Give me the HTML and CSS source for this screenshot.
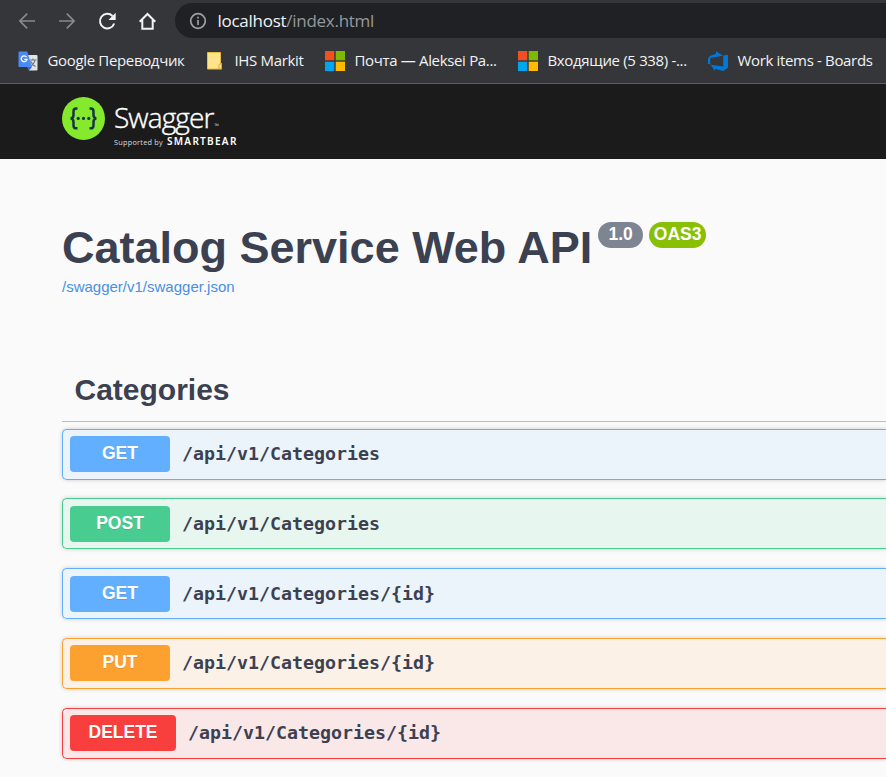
FILE: index.html
```html
<!DOCTYPE html>
<html lang="en">
<head>
<meta charset="utf-8">
<title>Swagger UI</title>
<link rel="stylesheet" href="styles.css">
</head>
<body>
<header class="browser">
  <div class="toolbar">
    <svg class="nav dim" viewBox="0 0 20 20"><path d="M18 10H3M10.200 2.700 2.900 10l7.300 7.300"/></svg>
    <svg class="nav dim" viewBox="0 0 20 20"><path d="M2 10h15M9.800 2.700 17.100 10l-7.300 7.300"/></svg>
    <svg class="nav" viewBox="0 0 20 20"><path d="M15.500 5A7.300 7.300 0 1 0 17.200 12.500"/><path class="solid" d="M18.700 1.800v7.300h-7.300z"/></svg>
    <svg class="nav" viewBox="0 0 20 20"><path d="M2.700 10.700 10.500 3l7.800 7.700M5.300 9v8.700h10.400V9"/></svg>
    <div class="address">
      <svg class="info" viewBox="0 0 18 18"><circle cx="9" cy="9" r="7.300"/><path d="M9 8v5M9 4.700v1.900"/></svg>
      <span class="url">localhost<span class="url-path">/index.html</span></span>
    </div>
  </div>
  <nav class="bookmarks">
    <a class="bookmark translate"><svg class="fav" viewBox="0 0 20 20"><path fill="#e1e3e6" d="M8 4h10.500q1 0 1 1v13.500q0 1-1 1H11z"/><path fill="none" stroke="#6c7a83" stroke-width="1.200" d="M11.500 9h7M15 7.500V9m2 0c-.5 3-2.500 5-5 6.500M12.500 10c1 2.500 3 4.500 5 5.500"/><path fill="#3367d6" d="M9 16h5l-3 3.500z"/><path fill="#4b8bf5" d="M1.500.5h7.700L14 16H1.500q-1 0-1-1V1.500q0-1 1-1z"/><path fill="none" stroke="#fff" stroke-width="1.300" d="M8.500 6A2.900 2.900 0 1 0 9 8.400H6.300"/></svg><span class="label">Google Переводчик</span></a>
    <a class="bookmark ihs"><svg class="fav" viewBox="0 0 20 20"><path fill="#ffe48c" stroke="#e9bd45" d="M2.500 1.500h13v11h1v5.500h-14z"/><path fill="#ffe48c" stroke="#dda928" d="M14 17.500v-4l2.500-1v5.500z"/></svg><span class="label">IHS Markit</span></a>
    <a class="bookmark mail"><svg class="fav" viewBox="0 0 20 20"><path fill="#f25022" d="M0 0h9.300v9.300H0z"/><path fill="#7fba00" d="M10.700 0H20v9.300h-9.300z"/><path fill="#00a4ef" d="M0 10.700h9.300V20H0z"/><path fill="#ffb900" d="M10.700 10.700H20V20h-9.300z"/></svg><span class="label">Почта — Aleksei Pa...</span></a>
    <a class="bookmark inbox"><svg class="fav" viewBox="0 0 20 20"><path fill="#f25022" d="M0 0h9.300v9.300H0z"/><path fill="#7fba00" d="M10.700 0H20v9.300h-9.300z"/><path fill="#00a4ef" d="M0 10.700h9.300V20H0z"/><path fill="#ffb900" d="M10.700 10.700H20V20h-9.300z"/></svg><span class="label">Входящие (5 338) -...</span></a>
    <a class="bookmark boards"><svg class="fav" viewBox="0 0 20 20"><path fill="#0078d7" d="M0 7.300 2 5 8 2.800V.2L15 4.700 2.300 7v6.500L0 13zM20 3.700v13L15.200 20 7 17.800V20l-4.400-6.300 12.600 1.700V4.600z"/></svg><span class="label">Work items - Boards</span></a>
  </nav>
</header>
<div class="topbar">
  <svg class="mark" viewBox="0 0 43 43"><circle cx="21.500" cy="21.500" r="21.500" fill="#85ea2d"/><g fill="none" stroke="#173647" stroke-width="2.500"><path d="M15.500 11.600h-1.300q-2.700 0-2.700 2.900v3.500q0 3.400-3 3.400 3 0 3 3.500v3.500q0 2.900 2.700 2.900h1.300M27.500 11.600h1.300q2.700 0 2.700 2.900v3.500q0 3.400 3 3.400-3 0-3 3.500v3.500q0 2.900-2.700 2.900h-1.300"/></g><g fill="#173647"><circle cx="16.200" cy="21.400" r="1.600"/><circle cx="21.500" cy="21.400" r="1.600"/><circle cx="26.800" cy="21.400" r="1.600"/></g></svg>
  <div class="wordmark">
    <div class="brand">Swagger<span class="tm">™</span></div>
    <div class="support"><span class="by">Supported by</span><b>SMARTBEAR</b></div>
  </div>
</div>
<main class="page">
  <div class="title-row">
    <h1>Catalog Service Web API</h1>
    <span class="badge version">1.0</span>
    <span class="badge oas">OAS3</span>
  </div>
  <a class="spec">/swagger/v1/swagger.json</a>
  <h2>Categories</h2>
  <section class="operations">
    <div class="op get"><span class="method">GET</span><span class="path">/api/v1/Categories</span></div>
    <div class="op post"><span class="method">POST</span><span class="path">/api/v1/Categories</span></div>
    <div class="op get"><span class="method">GET</span><span class="path">/api/v1/Categories/{id}</span></div>
    <div class="op put"><span class="method">PUT</span><span class="path">/api/v1/Categories/{id}</span></div>
    <div class="op delete"><span class="method">DELETE</span><span class="path">/api/v1/Categories/{id}</span></div>
  </section>
</main>
</body>
</html>
```
FILE: styles.css
```css
* { box-sizing: border-box; }
body {
  margin: 0;
  height: 777px;
  overflow: hidden;
  background: #fafafa;
  color: #3b4151;
  font-family: "Liberation Sans", Arial, sans-serif;
}
.browser {
  height: 84px;
  background: #35363a;
  border-bottom: 1px solid #5c5d5f;
  color: #f1f3f4;
  font-family: "Open Sans", "Noto Sans", sans-serif;
  white-space: nowrap;
}
.toolbar {
  display: flex;
  align-items: center;
  gap: 20px;
  height: 41px;
  padding: 0 0 0 17px;
}
.nav {
  flex: none;
  width: 20px;
  height: 20px;
  fill: none;
  stroke: #f1f3f4;
  stroke-width: 2;
}
.nav .solid { fill: #f1f3f4; stroke: none; }
.dim { stroke: #88898c; stroke-width: 1.700; }
.address {
  display: flex;
  align-items: center;
  flex: 1;
  gap: 11px;
  height: 35px;
  margin-left: -2px;
  padding-left: 13.500px;
  border-radius: 18px 0 0 18px;
  background: #202124;
}
.info {
  width: 18px;
  height: 18px;
  fill: none;
  stroke: #9aa0a6;
  stroke-width: 1.700;
}
.url { font-size: 17px; letter-spacing: -0.270px; }
.url-path { color: #96999c; }
.bookmarks {
  display: flex;
  height: 40px;
  padding-left: 18px;
}
.bookmark {
  display: flex;
  align-items: center;
  flex: none;
  gap: 9.500px;
  font-size: 15px;
}
.label { padding-bottom: 2px; letter-spacing: -0.340px; }
.fav { flex: none; width: 20px; height: 20px; }
.translate { width: 187px; }
.ihs { width: 120px; }
.mail { width: 193px; }
.inbox { width: 190px; }
.topbar {
  display: flex;
  gap: 9px;
  height: 75px;
  padding: 13px 0 0 62px;
  background: #1b1b1b;
  color: #fff;
}
.mark { width: 43px; height: 43px; }
.wordmark { padding-top: 2px; font-family: "Open Sans", sans-serif; }
.brand {
  height: 37px;
  font-size: 28px;
  font-weight: 300;
  line-height: 37px;
  letter-spacing: -0.900px;
  -webkit-text-stroke: 0.400px #fff;
}
.tm { margin-left: 1px; font-size: 6px; letter-spacing: 0; -webkit-text-stroke: 0; }
.support {
  display: flex;
  gap: 4px;
  line-height: 11px;
  white-space: nowrap;
}
.by { padding-top: 0.500px; color: #ddd; font-size: 7.300px; letter-spacing: 0.250px; }
.support b { font-family: "Noto Sans", sans-serif; font-size: 10px; font-weight: 600; letter-spacing: 1.300px; }
.page { padding: 62px 0 0 62px; }
.title-row { display: flex; align-items: flex-start; }
h1 {
  margin: 0;
  font-size: 45px;
  line-height: 54px;
  white-space: nowrap;
}
.badge {
  height: 26px;
  border-radius: 13px;
  color: #fff;
  font-size: 17.500px;
  font-weight: bold;
  line-height: 25px;
  text-align: center;
}
.version { width: 45px; margin: 1px 6px 0 6px; background: #7d8492; }
.oas { width: 57px; margin-top: 1px; background: #89bf04; }
.spec {
  display: block;
  height: 22px;
  padding-top: 2px;
  color: #4990e2;
  font-size: 15px;
  line-height: 20px;
}
h2 {
  height: 65px;
  margin: 60px 0 6.600px;
  padding: 1px 0 0 12.500px;
  border-bottom: 1px solid #bcbec2;
  font-size: 30px;
  line-height: 64px;
}
.op {
  display: flex;
  gap: 12.500px;
  height: 51px;
  margin-bottom: 18.750px;
  padding: 6.500px;
  border: 1px solid;
  border-right: 0;
  border-radius: 5px 0 0 5px;
  box-shadow: 0 0 4px rgba(0, 0, 0, 0.190);
}
.method {
  min-width: 100px;
  height: 36px;
  padding: 0 18px 0 19px;
  border-radius: 4px;
  color: #fff;
  font-size: 17.500px;
  font-weight: bold;
  line-height: 35.200px;
  text-align: center;
  text-shadow: 0 1px 0 rgba(0, 0, 0, 0.100);
}
.path {
  font-family: "DejaVu Sans Mono", monospace;
  font-size: 18.270px;
  font-weight: bold;
  line-height: 36.200px;
}
.get { border-color: #61affe; background: #ebf3fb; }
.get .method { background: #61affe; }
.post { border-color: #49cc90; background: #e8f6f0; }
.post .method { background: #49cc90; }
.put { border-color: #fca130; background: #fbf1e6; }
.put .method { background: #fca130; }
.delete { border-color: #f93e3e; background: #fae7e7; }
.delete .method { background: #f93e3e; }
```
